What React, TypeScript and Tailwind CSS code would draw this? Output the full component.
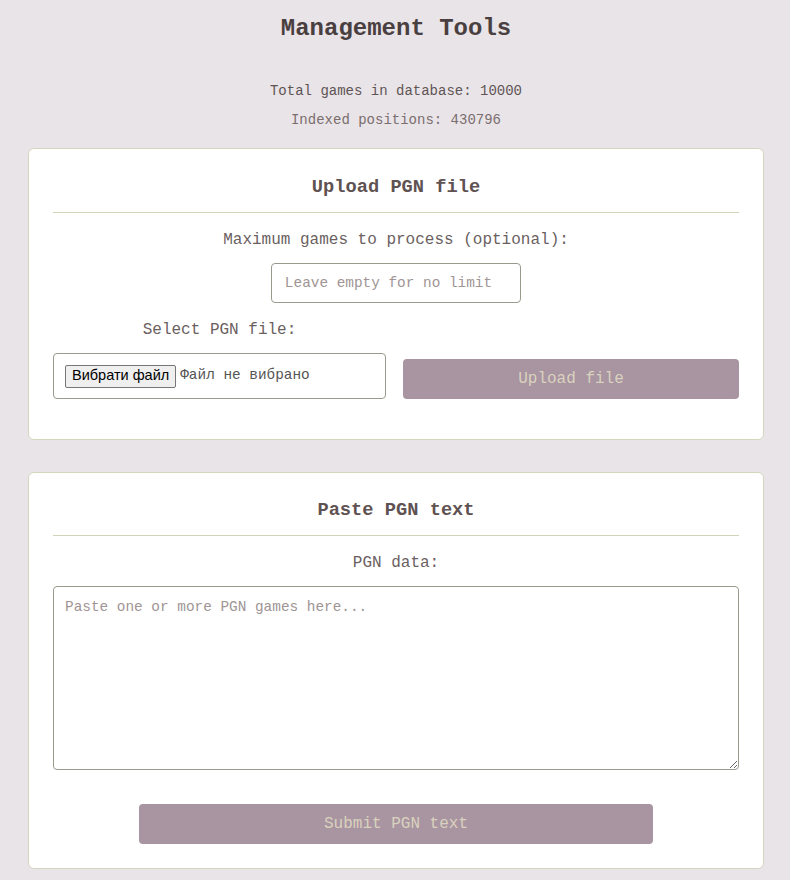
import React from 'react';

const mono = { fontFamily: '"Liberation Mono", "Courier New", monospace' };

export default function App() {
  return (
    <div className="min-h-[880px] bg-[#e9e4e8] pl-[28px] pr-[26px] pt-[15px] pb-[12px]" style={mono}>
      <h1 className="text-center text-[24px] leading-[28px] font-bold text-[#4a3f40]">Management Tools</h1>

      <div className="mt-[38px] text-center text-[14px] text-[#5f5454]">
        <p className="leading-[20px]">Total games in database: 10000</p>
        <p className="mt-[9px] leading-[20px] text-[#7a6e6e]">Indexed positions: 430796</p>
      </div>

      <section className="mt-[18px] rounded-[6px] border border-[#d6d6c0] bg-white px-[24px] pt-[25px] pb-[40px]">
        <h3 className="border-b border-[#d4d4b8] pb-[12px] text-center text-[18.72px] leading-[26px] font-bold text-[#5f5252]">
          Upload PGN file
        </h3>
        <label className="mt-[17px] block text-center text-[16px] leading-[20px] text-[#6b5f5f]">
          Maximum games to process (optional):
        </label>
        <div className="mt-[13px] flex justify-center">
          <input
            type="number"
            placeholder="Leave empty for no limit"
            className="h-[40px] w-[250px] rounded-[4px] border border-[#9a9a8c] px-[12px] text-center text-[14.4px] text-[#444] placeholder:text-[#a09494] outline-none"
            style={mono}
          />
        </div>

        <div className="mt-[17px] grid grid-cols-[333px_1fr] items-end gap-[17px]">
          <div>
            <p className="text-center text-[16px] leading-[20px] text-[#6b5f5f]">Select PGN file:</p>
            <div className="mt-[13px] flex h-[46px] items-center rounded-[4px] border border-[#9a9a8c] px-[11px] text-[14.4px] text-[#555]">
              <span
                className="flex h-[23px] items-center rounded-[2px] border border-[#767676] bg-[#efefef] px-[6px] text-[14.5px] text-black"
                style={{ fontFamily: '"Liberation Sans", Arial, sans-serif' }}
              >
                Вибрати файл
              </span>
              <span className="ml-[4px]">Файл не вибрано</span>
            </div>
          </div>
          <button
            className="h-[40px] rounded-[4px] bg-[#a994a2] text-[16px] text-[#d9d2bd]"
            style={mono}
          >
            Upload file
          </button>
        </div>
      </section>

      <section className="mt-[32px] rounded-[6px] border border-[#d6d6c0] bg-white px-[24px] pt-[24px] pb-[24px]">
        <h3 className="border-b border-[#d4d4b8] pb-[12px] text-center text-[18.72px] leading-[26px] font-bold text-[#5f5252]">
          Paste PGN text
        </h3>
        <label className="mt-[17px] block text-center text-[16px] leading-[20px] text-[#6b5f5f]">PGN data:</label>
        <textarea
          placeholder="Paste one or more PGN games here..."
          className="mt-[13px] block h-[184px] w-full rounded-[4px] border border-[#9a9a8c] px-[11px] py-[10px] text-[14.4px] text-[#444] placeholder:text-[#a09494] outline-none"
          style={mono}
        />
        <div className="mt-[34px] flex justify-center">
          <button
            className="h-[40px] w-3/4 rounded-[4px] bg-[#a994a2] text-[16px] text-[#d9d2bd]"
            style={mono}
          >
            Submit PGN text
          </button>
        </div>
      </section>
    </div>
  );
}
